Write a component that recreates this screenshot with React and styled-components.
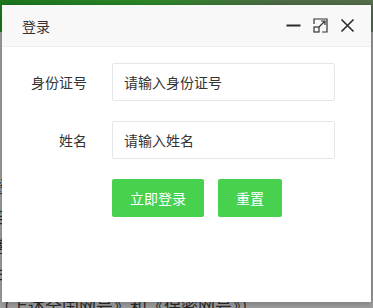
import React from "react";
import styled, { createGlobalStyle } from "styled-components";

const Global = createGlobalStyle`
  html, body { margin: 0; padding: 0; }
  body {
    width: 373px; height: 308px; overflow: hidden;
    font-family: "Noto Sans CJK SC", "Noto Sans", sans-serif;
    background: #9a9a9a;
  }
`;

const Page = styled.div`
  position: relative;
  width: 373px;
  height: 308px;
  overflow: hidden;
`;

const Backdrop = styled.div`
  display: flex;
  flex-direction: column;
  height: 100%;
  background: #a0a0a0;
`;

const Banner = styled.div`
  height: 32px;
  flex: none;
  background: linear-gradient(90deg, #1c7a1c 0%, #2d8a2a 40%, #4f6e45 75%, #56704d 100%);
`;

const BackText = styled.div`
  display: flex;
  flex-direction: column;
  gap: 12px;
  padding: 145px 0 0 0;
  margin-left: -6px;
  font-size: 17px;
  line-height: 18px;
  color: #2a2a2a;
  white-space: nowrap;
`;

const Dialog = styled.div`
  position: absolute;
  left: 2px;
  top: 5px;
  width: 369px;
  height: 297px;
  background: #fff;
  display: flex;
  flex-direction: column;
  box-shadow: 1px 1px 8px rgba(0, 0, 0, 0.3);
`;

const TitleBar = styled.div`
  height: 42px;
  flex: none;
  box-sizing: border-box;
  display: flex;
  align-items: center;
  justify-content: space-between;
  padding: 0 16px 0 20px;
  background: #f8f8f8;
  border-bottom: 1px solid #eeeeee;
`;

const Title = styled.span`
  font-size: 14px;
  color: #333;
`;

const Tools = styled.div`
  display: flex;
  align-items: center;
  gap: 12px;
`;

const ToolIcon = styled.svg`
  width: 15px;
  height: 15px;
  display: block;
`;

const Form = styled.div`
  display: flex;
  flex-direction: column;
  gap: 20px;
  padding: 16px 36px 0 0;
`;

const Row = styled.div`
  display: flex;
  align-items: center;
`;

const Label = styled.label`
  width: 85px;
  flex: none;
  text-align: right;
  font-size: 14px;
  color: #333;
`;

const Input = styled.input`
  margin-left: 25px;
  flex: 1;
  height: 38px;
  box-sizing: border-box;
  border: 1px solid #e6e6e6;
  border-radius: 2px;
  padding: 0 11px;
  font-family: inherit;
  font-size: 14px;
  color: #333;
  outline: none;
  &::placeholder { color: #333; }
`;

const Buttons = styled.div`
  display: flex;
  gap: 14px;
  padding-left: 110px;
`;

const Button = styled.button`
  height: 38px;
  padding: 0 ${(p) => p.$pad}px;
  border: none;
  border-radius: 2px;
  background: #48d04f;
  color: #fff;
  font-family: inherit;
  font-size: 14px;
  cursor: pointer;
`;

export default function App() {
  return (
    <Page>
      <Global />
      <Backdrop>
        <Banner />
        <BackText>
          <span>经</span>
          <span>些</span>
          <span>客</span>
          <span>可</span>
          <span>（上述全国网号》和《保密网号》）</span>
        </BackText>
      </Backdrop>
      <Dialog>
        <TitleBar>
          <Title>登录</Title>
          <Tools>
            <ToolIcon viewBox="0 0 15 15">
              <rect x="0.5" y="6.5" width="14" height="2" fill="#2b2b2b" />
            </ToolIcon>
            <ToolIcon viewBox="0 0 15 15">
              <path d="M1 6V1h13v13H9" fill="none" stroke="#333" strokeWidth="1.2" />
              <rect x="1" y="9" width="5" height="5" fill="none" stroke="#333" strokeWidth="1.2" />
              <path d="M6 9l6-6M8 3h4v4" fill="none" stroke="#333" strokeWidth="1.2" />
            </ToolIcon>
            <ToolIcon viewBox="0 0 15 15">
              <path d="M1.5 1.5l12 12M13.5 1.5l-12 12" fill="none" stroke="#2b2b2b" strokeWidth="1.6" />
            </ToolIcon>
          </Tools>
        </TitleBar>
        <Form>
          <Row>
            <Label>身份证号</Label>
            <Input placeholder="请输入身份证号" />
          </Row>
          <Row>
            <Label>姓名</Label>
            <Input placeholder="请输入姓名" />
          </Row>
          <Buttons>
            <Button $pad={18}>立即登录</Button>
            <Button $pad={18}>重置</Button>
          </Buttons>
        </Form>
      </Dialog>
    </Page>
  );
}
